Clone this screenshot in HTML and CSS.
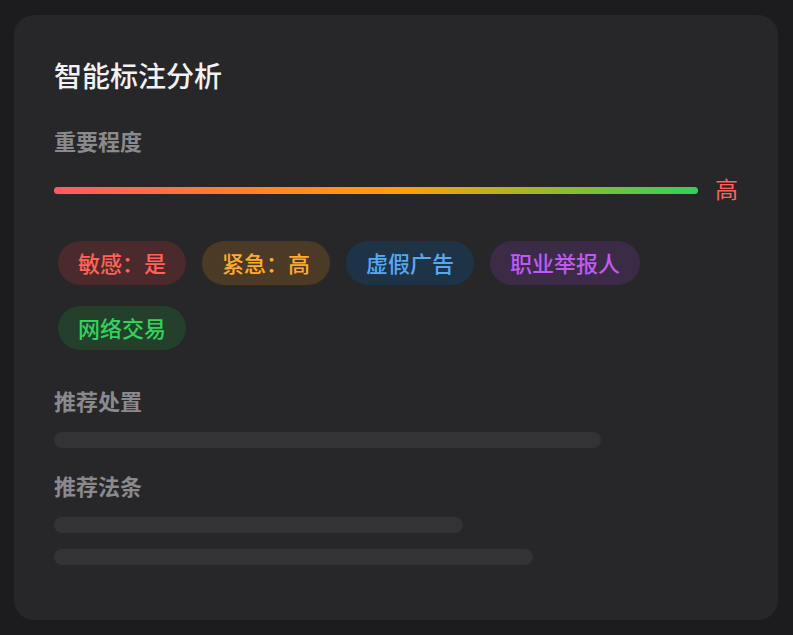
FILE: index.html
```html
<!DOCTYPE html>
<html lang="zh-CN">
<head>
    <meta charset="UTF-8" />
    <meta name="viewport" content="width=device-width, initial-scale=1.0"/>
    <title>智能标注分析</title>
    <link rel="stylesheet" href="styles.css">
</head>
<body>

    <div class="card">
        <div class="card-title">智能标注分析</div>

        <div class="label">重要程度</div>
        <div class="level-row">
            <div class="level-bar"></div>
            <div class="level-text">高</div>
        </div>

        <!-- 标签 -->
        <div class="tags">
            <span class="tag red">敏感：是</span>
            <span class="tag orange">紧急：高</span>
            <span class="tag blue">虚假广告</span>
            <span class="tag purple">职业举报人</span>
            <span class="tag green">网络交易</span>
        </div>

        <div class="label section first">推荐处置</div>
        <div class="skeleton" style="width: 547px"></div>

        <div class="label section">推荐法条</div>
        <div class="skeleton" style="width: 409px"></div>
        <div class="skeleton" style="width: 479px"></div>
    </div>

</body>
</html>
```

FILE: styles.css
```css
body {
    margin: 0;
    padding: 15px 15px 15px 14px;
    background: #1c1c1e;
    font-family: "Noto Sans CJK SC", "Noto Sans", sans-serif;
}

.card {
    background: #27272a;
    border-radius: 20px;
    padding: 40px 40px 55px 40px;
}

.card-title {
    font-size: 28px;
    line-height: 40px;
    font-weight: 500;
    color: #f2f2f4;
}

.label {
    margin-top: 30px;
    font-size: 22px;
    line-height: 30px;
    font-weight: 600;
    color: #8a8a8e;
}

.level-row {
    display: flex;
    align-items: center;
    gap: 17px;
    margin-top: 20px;
    height: 30px;
}

.level-bar {
    flex: 1;
    height: 7px;
    border-radius: 4px;
    background: linear-gradient(90deg, #ff5a5f 0%, #ff9f0a 54%, #34d058 100%);
}

.level-text {
    font-size: 23px;
    line-height: 30px;
    padding-bottom: 5px;
    color: #ff6259;
}

.tags {
    display: flex;
    flex-wrap: wrap;
    gap: 21px 16px;
    margin-top: 36px;
    padding-left: 4px;
}

.tag {
    display: inline-block;
    padding: 0 20px;
    height: 44px;
    line-height: 43px;
    border-radius: 22px;
    font-size: 22px;
    font-weight: 500;
}

.tag.red {
    background: #4a2a2c;
    color: #ff6259;
}

.tag.orange {
    background: #4b3a25;
    color: #ffab2e;
}

.tag.blue {
    background: #1f3347;
    color: #56a8f5;
}

.tag.purple {
    background: #3b2b47;
    color: #bf5af2;
}

.tag.green {
    background: #253f2d;
    color: #32d25c;
}

.label.section {
    margin-top: 22px;
}

.label.section.first {
    margin-top: 35px;
}

.skeleton {
    height: 16px;
    border-radius: 8px;
    background: #333336;
    margin-top: 16px;
}

.label.section + .skeleton {
    margin-top: 17px;
}
```
